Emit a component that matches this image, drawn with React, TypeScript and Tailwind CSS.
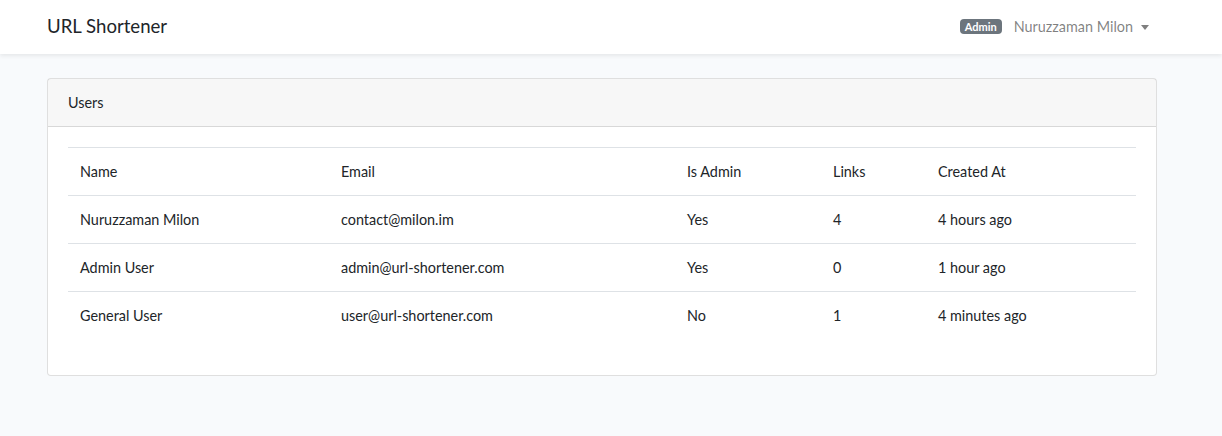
const USERS = [
  { name: "Nuruzzaman Milon", email: "contact@milon.im", admin: "Yes", links: 4, created: "4 hours ago" },
  { name: "Admin User", email: "admin@url-shortener.com", admin: "Yes", links: 0, created: "1 hour ago" },
  { name: "General User", email: "user@url-shortener.com", admin: "No", links: 1, created: "4 minutes ago" },
];

const COLS = [
  { label: "Name", w: "w-[261px]" },
  { label: "Email", w: "w-[346px]" },
  { label: "Is Admin", w: "w-[146px]" },
  { label: "Links", w: "w-[105px]" },
  { label: "Created At", w: "" },
];

export default function App() {
  return (
    <div className="min-h-[436px] bg-[#f8fafc] text-[#212529] text-[14.4px] leading-[1.6] font-['Lato','Noto_Sans',sans-serif]">
      {/* Navbar */}
      <nav className="relative h-[54px] bg-white shadow-[0_2px_4px_rgba(0,0,0,0.075)]">
        <div className="ml-[47px] flex h-full w-[1110px] items-center justify-between">
          <span className="text-[18.6px] text-[#212529]">URL Shortener</span>
          <div className="flex items-center pr-[8px]">
            <span className="rounded-[4px] bg-[#6c757d] px-[5px] py-[1px] text-[11px] font-bold leading-[13px] text-white">
              Admin
            </span>
            <span className="ml-[12px] text-[rgba(0,0,0,0.5)]">Nuruzzaman Milon</span>
            <span className="ml-[8px] mt-[1px] h-0 w-0 border-x-[4px] border-t-[5px] border-x-transparent border-t-[rgba(0,0,0,0.5)]" />
          </div>
        </div>
      </nav>

      <div className="pt-[24px]">
        <div className="ml-[47px] w-[1110px] rounded-[4px] border border-[rgba(0,0,0,0.125)] bg-white">
          <div className="border-b border-[rgba(0,0,0,0.125)] bg-[rgba(0,0,0,0.03)] px-[20px] py-[12px]">Users</div>
          <div className="p-[20px]">
            <table className="mb-[16px] w-full border-collapse text-left">
              <thead>
                <tr>
                  {COLS.map((c) => (
                    <th
                      key={c.label}
                      className={`${c.w} border-t border-b border-[#dee2e6] p-[12px] font-normal`}
                    >
                      {c.label}
                    </th>
                  ))}
                </tr>
              </thead>
              <tbody>
                {USERS.map((u) => (
                  <tr key={u.email}>
                    <td className="border-t border-[#dee2e6] p-[12px]">{u.name}</td>
                    <td className="border-t border-[#dee2e6] p-[12px]">{u.email}</td>
                    <td className="border-t border-[#dee2e6] p-[12px]">{u.admin}</td>
                    <td className="border-t border-[#dee2e6] p-[12px]">{u.links}</td>
                    <td className="border-t border-[#dee2e6] p-[12px]">{u.created}</td>
                  </tr>
                ))}
              </tbody>
            </table>
          </div>
        </div>
      </div>
    </div>
  );
}
